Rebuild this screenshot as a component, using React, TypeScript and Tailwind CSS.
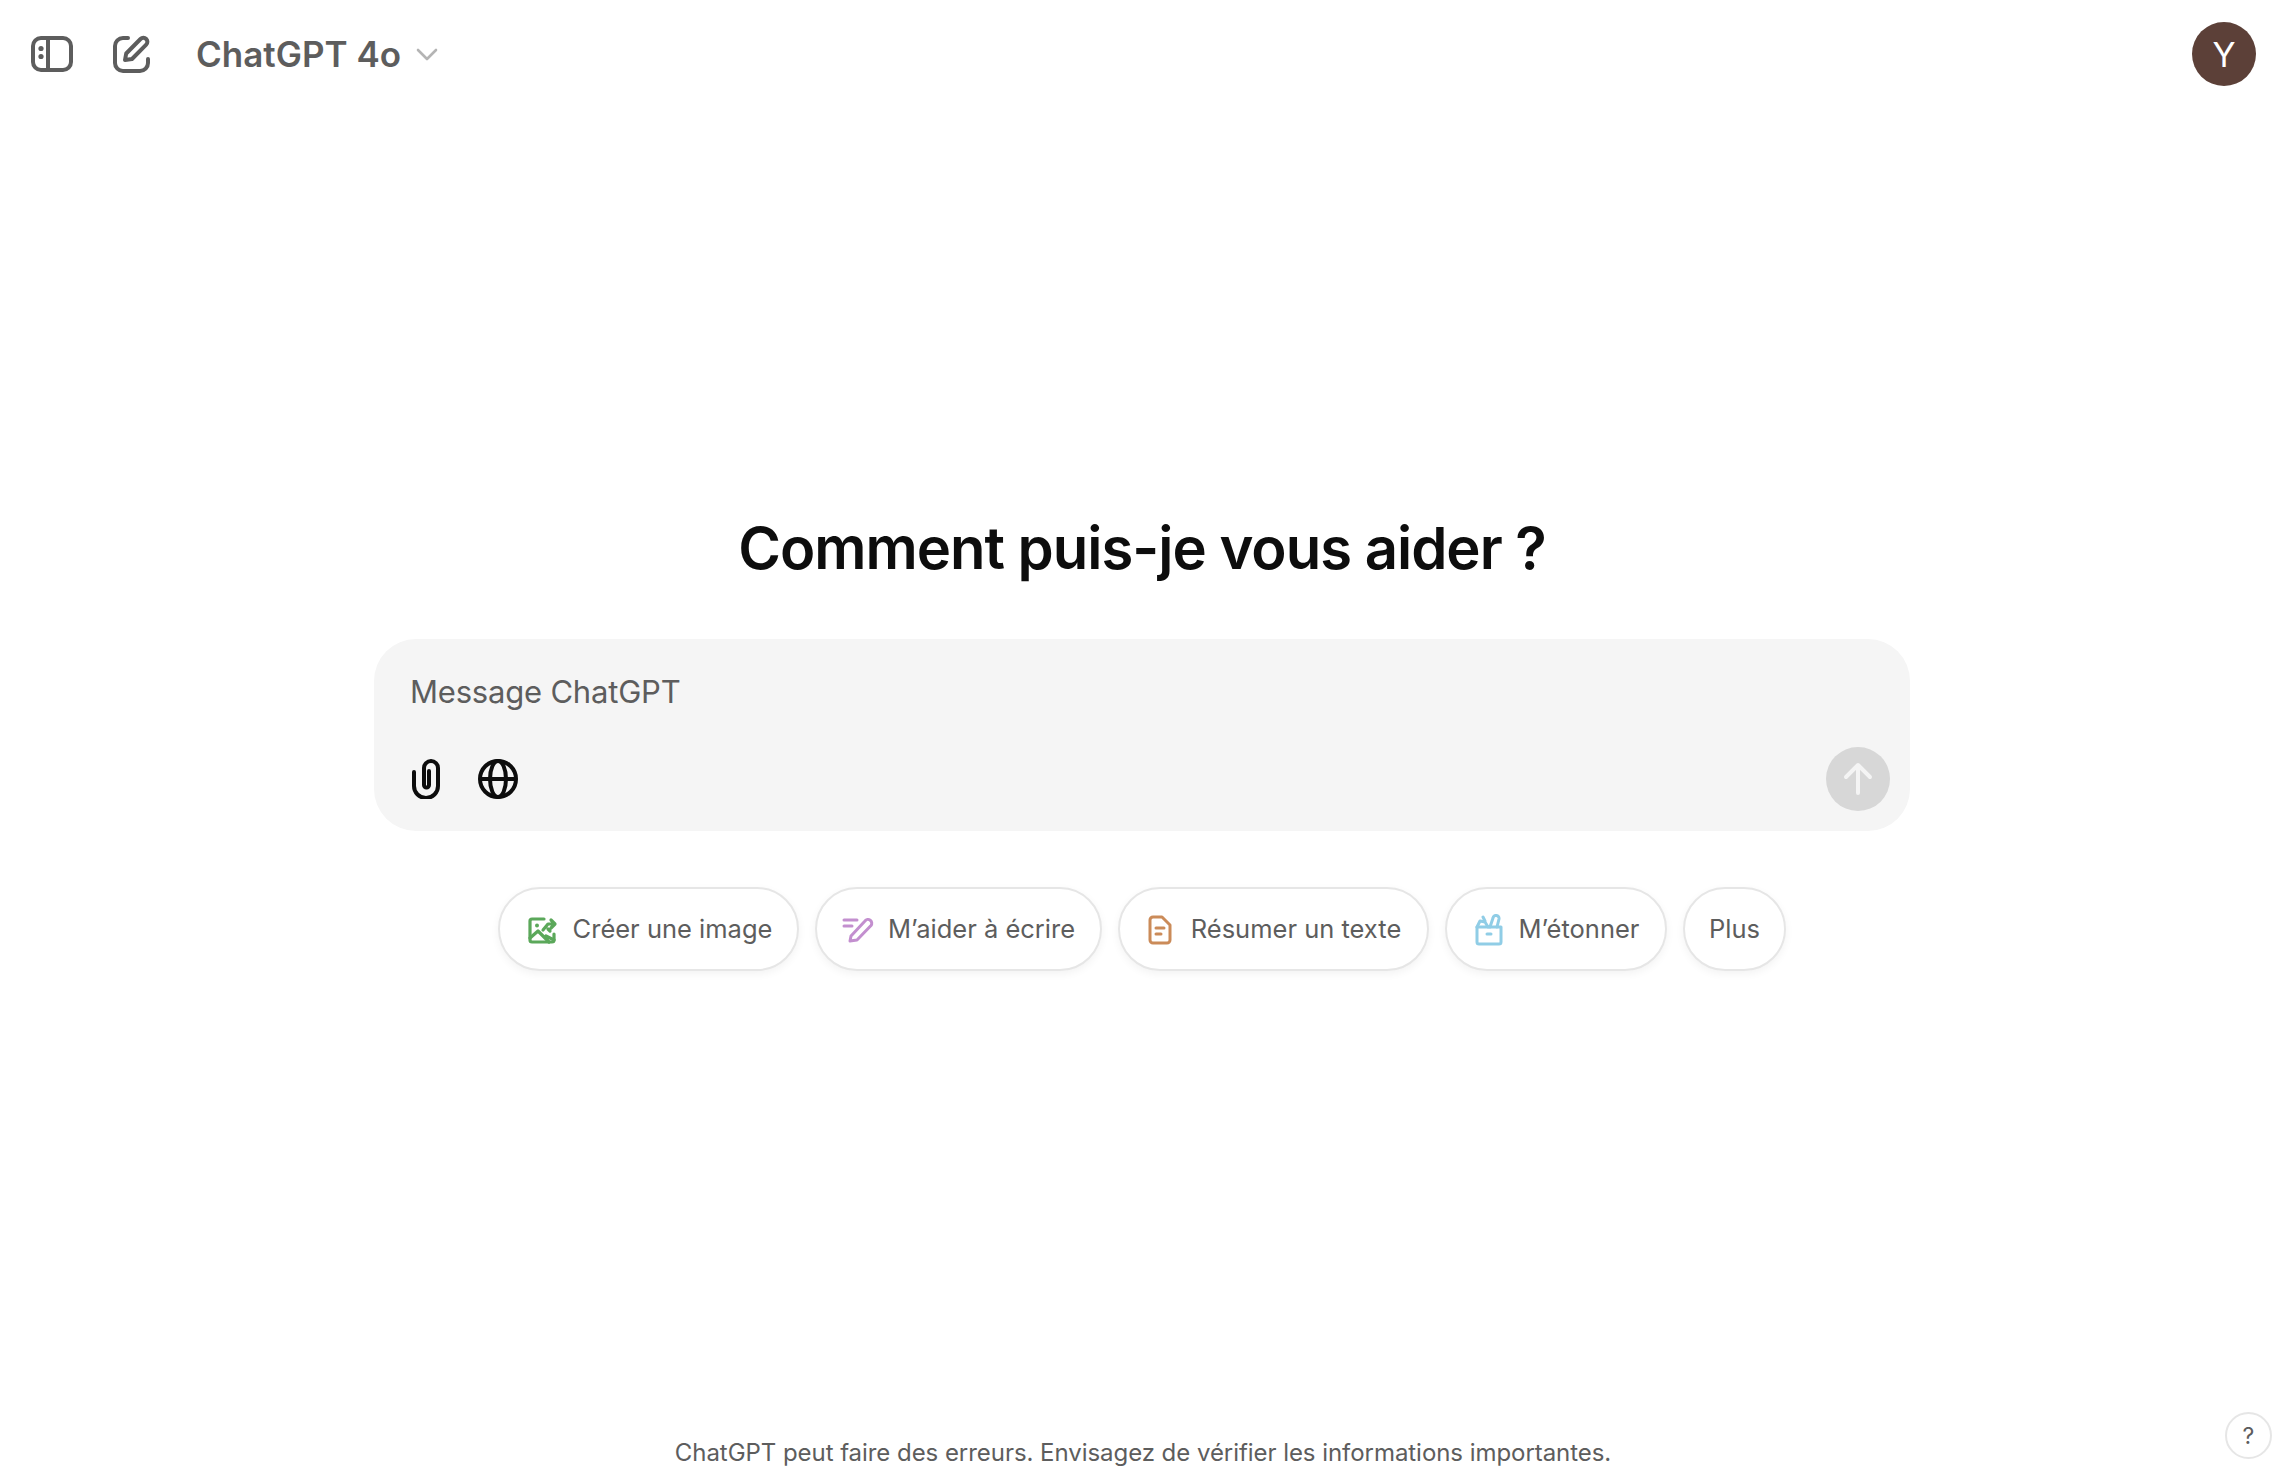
import type { ReactNode } from "react";

const font = "font-['Inter','Liberation_Sans',sans-serif]";

function SidebarIcon() {
  return (
    <svg width="42" height="36" viewBox="0 0 42 36" fill="none" stroke="#5d5d5d" strokeWidth="4">
      <rect x="2" y="2" width="38" height="32" rx="8" />
      <path d="M17 2v32" />
      <circle cx="10" cy="12.5" r="2.6" fill="#5d5d5d" stroke="none" />
      <circle cx="10" cy="20.5" r="2.6" fill="#5d5d5d" stroke="none" />
    </svg>
  );
}

function ComposeIcon() {
  return (
    <svg width="38" height="38" viewBox="0 0 38 38" fill="none" stroke="#5d5d5d" strokeWidth="4" strokeLinecap="round" strokeLinejoin="round">
      <path d="M15 3H10a8 8 0 0 0-8 8v17a8 8 0 0 0 8 8h17a8 8 0 0 0 8-8v-4" />
      <path d="M12 25l1.2-6.5L27.5 4a4 4 0 0 1 5.7 5.7L19 24z" />
    </svg>
  );
}

function ClipIcon() {
  return (
    <svg width="28" height="40" viewBox="0 0 28 40" fill="none" stroke="#0d0d0d" strokeWidth="4" strokeLinecap="round">
      <path d="M2 13v14a12 12 0 0 0 24 0V9a7 7 0 0 0-14 0v17a2.5 2.5 0 0 0 5 0V12" />
    </svg>
  );
}

function GlobeIcon() {
  return (
    <svg width="40" height="40" viewBox="0 0 40 40" fill="none" stroke="#0d0d0d" strokeWidth="4">
      <circle cx="20" cy="20" r="18" />
      <path d="M2 20h36" />
      <ellipse cx="20" cy="20" rx="8" ry="18" />
    </svg>
  );
}

function ImageIcon() {
  return (
    <svg width="30" height="28" viewBox="0 0 30 28" fill="none" stroke="#5ba85a" strokeWidth="3.2" strokeLinecap="round" strokeLinejoin="round">
      <path d="M16 3H4a2 2 0 0 0-2 2v19a2 2 0 0 0 2 2h20a2 2 0 0 0 2-2v-6" />
      <path d="M2 22l8-7 11 11M18 20l8 4" />
      <circle cx="9" cy="9.5" r="2" fill="#5ba85a" stroke="none" />
      <path d="M15 14l5-6h6M23 4l4 4-4 4M20 13l2 2" />
    </svg>
  );
}

function WriteIcon() {
  return (
    <svg width="32" height="26" viewBox="0 0 32 26" fill="none" stroke="#c38fcf" strokeWidth="3" strokeLinecap="round" strokeLinejoin="round">
      <path d="M2 3h13M2 9h8" />
      <path d="M8 24l1-5L23 4a3.5 3.5 0 0 1 6 4.5L15 23z" />
    </svg>
  );
}

function DocIcon() {
  return (
    <svg width="24" height="30" viewBox="0 0 24 30" fill="none" stroke="#cb8b59" strokeWidth="3" strokeLinecap="round" strokeLinejoin="round">
      <path d="M5 2h9l8 8v15a3 3 0 0 1-3 3H5a3 3 0 0 1-3-3V5a3 3 0 0 1 3-3z" />
      <path d="M8 13h8M8 19h5" />
    </svg>
  );
}

function GiftIcon() {
  return (
    <svg width="28" height="32" viewBox="0 0 28 32" fill="none" stroke="#90cde6" strokeWidth="3" strokeLinecap="round" strokeLinejoin="round">
      <path d="M2 13h24v15a2 2 0 0 1-2 2H4a2 2 0 0 1-2-2z" />
      <path d="M2 13l3-6 5 1 3 5M15 13l3-9a3 3 0 0 1 6 1l-2 8M8 3l2 4" />
      <path d="M12 20h4" />
    </svg>
  );
}

function Chip({ icon, label, className }: { icon?: ReactNode; label: string; className: string }) {
  return (
    <button className={`flex h-[84px] items-center justify-center rounded-full border-2 border-[#e6e6e6] bg-white pt-[1px] text-[25.5px] text-[#5d5d5d] shadow-[0_3px_8px_rgba(0,0,0,0.05)] ${className}`}>
      {icon}
      <span>{label}</span>
    </button>
  );
}

export default function App() {
  return (
    <div className={`relative flex h-[1474px] w-full flex-col bg-white ${font}`}>
      <header className="flex h-[108px] shrink-0 items-center pr-[30px] pl-[31px]">
        <SidebarIcon />
        <div className="ml-[40px]">
          <ComposeIcon />
        </div>
        <div className="ml-[45px] flex items-center gap-[15px]">
          <span className="text-[35px] font-semibold text-[#5d5d5d]">ChatGPT 4o</span>
          <svg width="22" height="13" viewBox="0 0 22 13" fill="none" stroke="#b4b4b4" strokeWidth="2.6" strokeLinecap="round" strokeLinejoin="round">
            <path d="M2 2l9 9 9-9" />
          </svg>
        </div>
        <div className="ml-auto flex h-[64px] w-[64px] items-center justify-center rounded-full bg-[#5c4038] text-[34px] text-white">
          Y
        </div>
      </header>

      <main className="flex flex-col items-center pt-[404px] pr-[2px]">
        <h1 className="text-[58px] leading-[72px] font-semibold tracking-[-1px] text-[#0d0d0d]">Comment puis-je vous aider ?</h1>

        <div className="mt-[55px] flex h-[192px] w-[1536px] flex-col justify-between rounded-[42px] bg-[#f5f5f5] pt-[33px] pr-[20px] pb-[20px] pl-[36px]">
          <div className="text-[31px] leading-[40px] tracking-[-0.2px] text-[#5d5d5d]">Message ChatGPT</div>
          <div className="flex items-center">
            <div className="ml-[2px]">
              <ClipIcon />
            </div>
            <div className="ml-[38px]">
              <GlobeIcon />
            </div>
            <div className="ml-auto flex h-[64px] w-[64px] items-center justify-center rounded-full bg-[#d7d7d7]">
              <svg width="30" height="34" viewBox="0 0 30 34" fill="none" stroke="#f4f4f4" strokeWidth="4" strokeLinecap="round" strokeLinejoin="round">
                <path d="M15 31V4M3 15L15 3l12 12" />
              </svg>
            </div>
          </div>
        </div>

        <div className="mt-[56px] flex gap-[16px]">
          <Chip icon={<ImageIcon />} label="Créer une image" className="w-[301px] gap-[15px] pl-[3px]" />
          <Chip icon={<WriteIcon />} label="M’aider à écrire" className="w-[287px] gap-[14px]" />
          <Chip icon={<DocIcon />} label="Résumer un texte" className="w-[311px] gap-[19px] pl-[2px]" />
          <Chip icon={<GiftIcon />} label="M’étonner" className="w-[222px] gap-[16px] pl-[2px]" />
          <Chip label="Plus" className="w-[103px]" />
        </div>
      </main>

      <footer className="mt-auto pb-[7px] text-center text-[24px] leading-[28px] tracking-[-0.05px] text-[#5d5d5d]">
        ChatGPT peut faire des erreurs. Envisagez de vérifier les informations importantes.
      </footer>

      <div className="absolute right-[14px] bottom-[15px] flex h-[47px] w-[47px] items-center justify-center rounded-full border-2 border-[#e6e6e6] bg-white pt-[2px] text-[23px] text-[#5d5d5d]">
        ?
      </div>
    </div>
  );
}
